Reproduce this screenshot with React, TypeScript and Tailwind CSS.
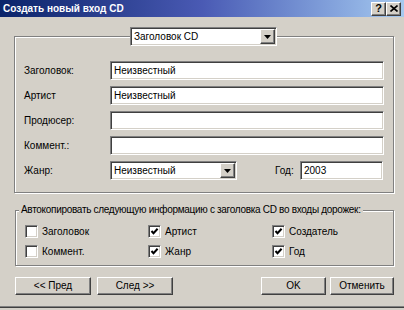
const sunken =
  'bg-white border border-t-[#808080] border-l-[#808080] border-b-white border-r-white shadow-[inset_1px_1px_0_#404040,inset_-1px_-1px_0_#d4d0c8]';
const raised =
  'bg-[#d4d0c8] border border-t-white border-l-white border-b-[#404040] border-r-[#404040] shadow-[inset_-1px_-1px_0_#808080]';
const etched = 'border border-[#808080] shadow-[inset_1px_1px_0_#ffffff,1px_1px_0_#ffffff]';

function Arrow() {
  return (
    <div className={`${raised} w-[15px] h-[15px] flex items-center justify-center shrink-0`}>
      <svg width="7" height="4" viewBox="0 0 7 4">
        <path d="M0 0h7L3.5 4z" fill="#000" />
      </svg>
    </div>
  );
}

function Combo({ value, className }: { value: string; className: string }) {
  return (
    <div className={`${sunken} ${className} h-[19px] flex items-center p-px`}>
      <span className="flex-1 pl-[2px] leading-none">{value}</span>
      <Arrow />
    </div>
  );
}

function Field({ value = '', className = 'flex-1' }: { value?: string; className?: string }) {
  return (
    <div className={`${sunken} ${className} h-[19px] flex items-center pl-[3px] leading-none`}>{value}</div>
  );
}

function Row({ label, children }: { label: string; children: React.ReactNode }) {
  return (
    <div className="flex items-center h-[19px]">
      <span className="w-[86px] shrink-0">{label}</span>
      {children}
    </div>
  );
}

function Check({ label, checked }: { label: string; checked: boolean }) {
  return (
    <div className="flex items-center h-[13px] gap-[4px]">
      <div className={`${sunken} w-[13px] h-[13px] flex items-center justify-center`}>
        {checked && (
          <svg width="9" height="9" viewBox="0 0 9 9">
            <path d="M1.5 4 L3.5 6.2 L7.6 1.8" fill="none" stroke="#000" strokeWidth="2" />
          </svg>
        )}
      </div>
      <span className="leading-none">{label}</span>
    </div>
  );
}

function Btn({ label, className }: { label: string; className: string }) {
  return (
    <div className={`${raised} ${className} h-[18px] flex items-center justify-center leading-none`}>{label}</div>
  );
}

function CaptionBtn({ children }: { children: React.ReactNode }) {
  return (
    <div className={`${raised} w-[15px] h-[14px] flex items-center justify-center`}>{children}</div>
  );
}

export default function App() {
  return (
    <div className="w-[404px] h-[310px] bg-[#d4d0c8] overflow-hidden flex flex-col font-['Liberation_Sans',sans-serif] text-[10px] text-black">
      <div className="h-[17px] shrink-0 flex items-center justify-between bg-gradient-to-r from-[#0a246a] via-[#4a5ab4] to-[#a6caf0] pl-[3px] pr-[3px]">
        <span className="text-white font-bold text-[10px] leading-none">Создать новый вход CD</span>
        <div className="flex">
          <CaptionBtn>
            <span className="font-bold text-[11px] leading-none">?</span>
          </CaptionBtn>
          <CaptionBtn>
            <svg width="8" height="7" viewBox="0 0 8 7">
              <path d="M0.5 0.5 L7.5 6.5 M7.5 0.5 L0.5 6.5" stroke="#000" strokeWidth="1.6" />
            </svg>
          </CaptionBtn>
        </div>
      </div>

      <div className={`${etched} relative ml-[14px] mt-[19px] w-[380px] h-[157px] shrink-0 pt-[24px] px-[9px] flex flex-col gap-[6px]`}>
        <div className="absolute left-[115px] -top-[10px] bg-[#d4d0c8]">
          <Combo value="Заголовок CD" className="w-[147px]" />
        </div>
        <Row label="Заголовок:">
          <Field value="Неизвестный" />
        </Row>
        <Row label="Артист">
          <Field value="Неизвестный" />
        </Row>
        <Row label="Продюсер:">
          <Field />
        </Row>
        <Row label="Коммент.:">
          <Field />
        </Row>
        <Row label="Жанр:">
          <Combo value="Неизвестный" className="w-[127px]" />
          <span className="ml-[38px] w-[25px]">Год:</span>
          <Field value="2003" className="w-[83px]" />
        </Row>
      </div>

      <div className={`${etched} relative ml-[15px] mt-[17px] w-[379px] h-[56px] shrink-0 pt-[14px] pl-[9px]`}>
        <span className="absolute left-[3px] -top-[6px] px-[2px] bg-[#d4d0c8] leading-none tracking-[-0.3px]">
          Автокопировать следующую информацию с заголовка CD во входы дорожек:
        </span>
        <div className="grid grid-cols-[123px_124px_auto] gap-y-[7px]">
          <Check label="Заголовок" checked={false} />
          <Check label="Артист" checked />
          <Check label="Создатель" checked />
          <Check label="Коммент." checked={false} />
          <Check label="Жанр" checked />
          <Check label="Год" checked />
        </div>
      </div>

      <div className="ml-[15px] mt-[11px] w-[379px] flex shrink-0">
        <Btn label="<< Пред" className="w-[76px]" />
        <Btn label="След >>" className="w-[76px] ml-[6px]" />
        <Btn label="OK" className="w-[65px] ml-auto" />
        <Btn label="Отменить" className="w-[64px] ml-[4px]" />
      </div>

      <div className="mt-[11px] h-px bg-[#808080] shrink-0" />
      <div className="h-px bg-[#404040] shrink-0" />
    </div>
  );
}
